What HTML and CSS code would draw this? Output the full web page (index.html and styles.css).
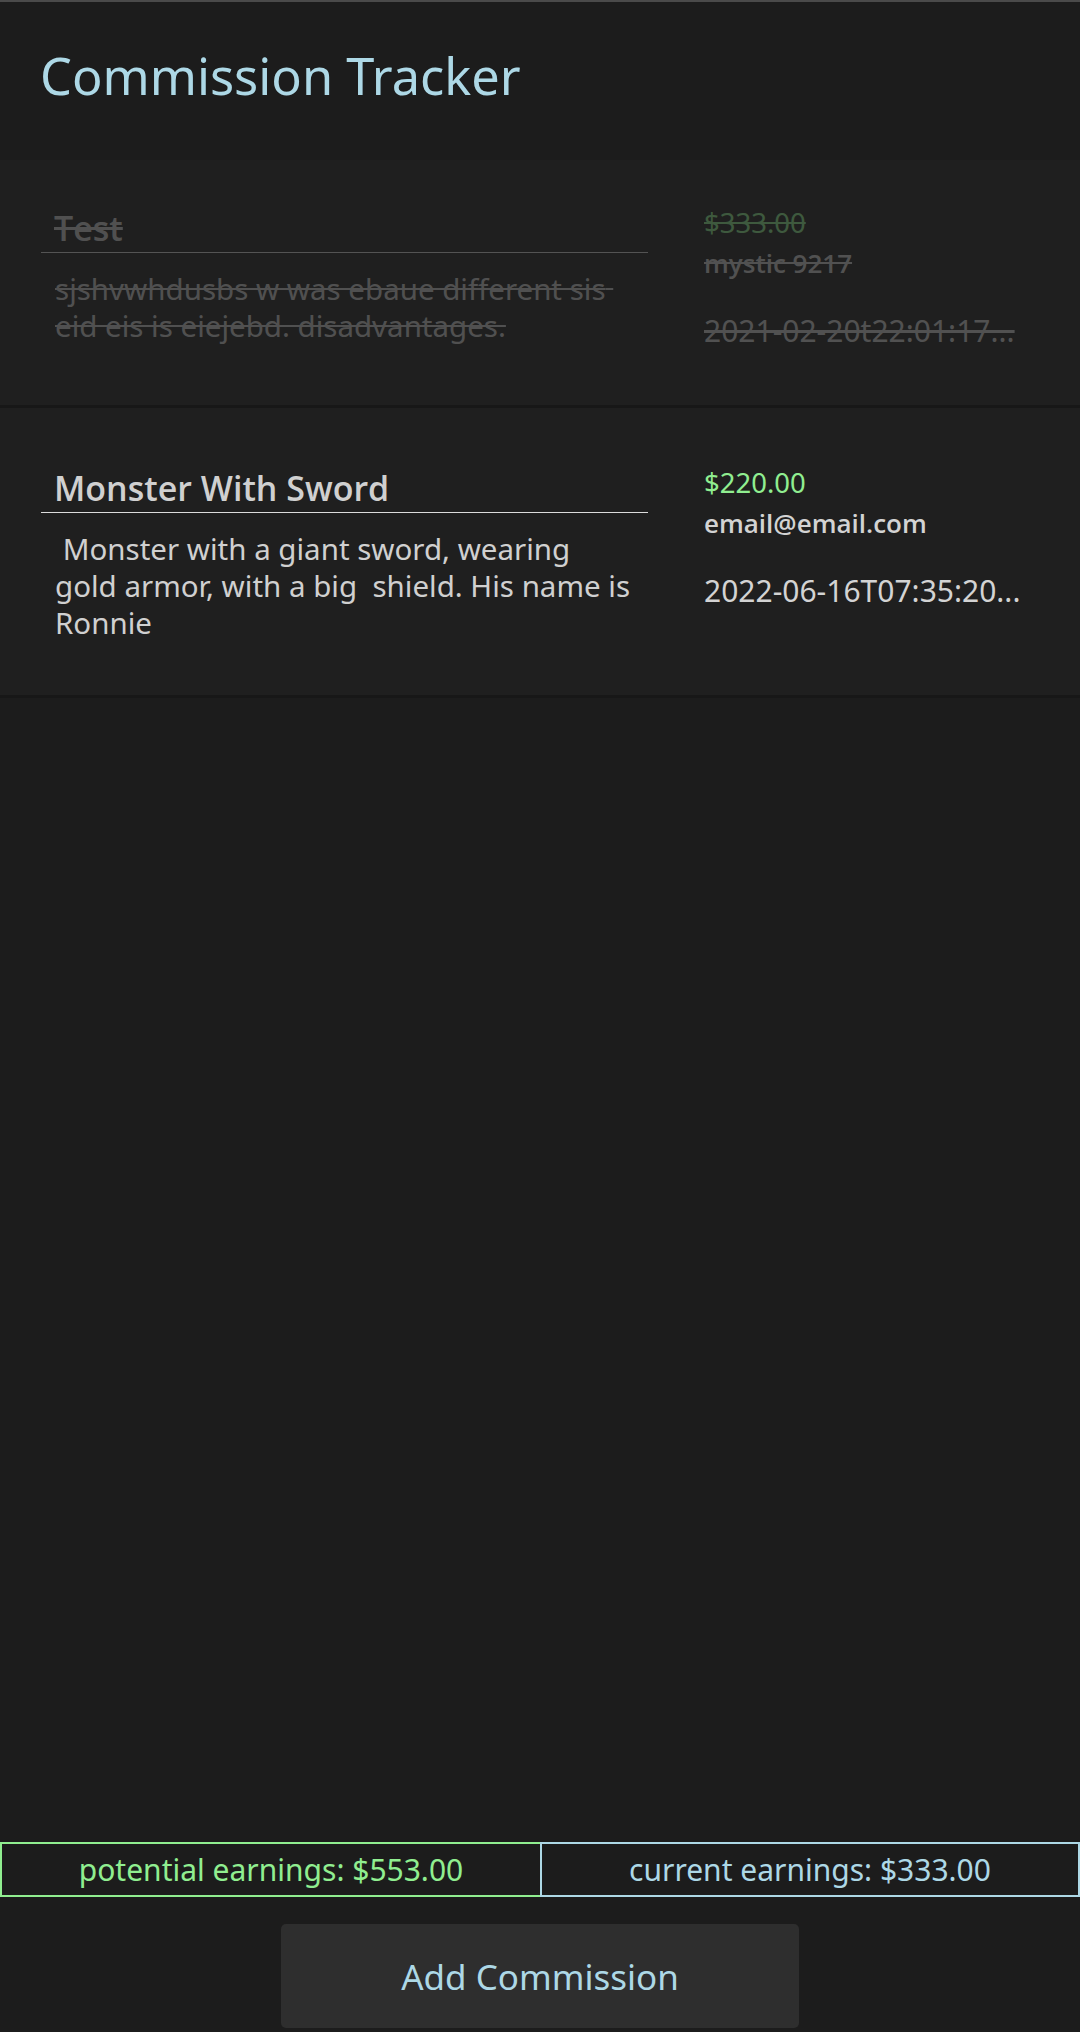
FILE: index.html
```html
<!DOCTYPE html>
<html lang="en">
<head>
<meta charset="utf-8">
<title>Commission Tracker</title>
<link rel="stylesheet" href="styles.css">
</head>
<body>
<div class="app">
  <header class="header">
    <h1 class="title">Commission Tracker</h1>
  </header>
  <main class="list">
    <div class="card card-done">
      <div class="card-main">
        <div class="card-title">Test</div>
        <div class="card-desc">sjshvwhdusbs w was ebaue different sis eid eis is eiejebd. disadvantages.</div>
      </div>
      <div class="card-meta">
        <div class="price">$333.00</div>
        <div class="client">mystic 9217</div>
        <div class="date">2021-02-20t22:01:17...</div>
      </div>
    </div>
    <div class="card">
      <div class="card-main">
        <div class="card-title">Monster With Sword</div>
        <div class="card-desc"> Monster with a giant sword, wearing gold armor, with a big  shield. His name is Ronnie</div>
      </div>
      <div class="card-meta">
        <div class="price">$220.00</div>
        <div class="client">email@email.com</div>
        <div class="date">2022-06-16T07:35:20...</div>
      </div>
    </div>
  </main>
  <footer class="footer">
    <div class="earnings">
      <div class="earn earn-potential">potential earnings: $553.00</div>
      <div class="earn earn-current">current earnings: $333.00</div>
    </div>
    <button class="add-btn" type="button">Add Commission</button>
  </footer>
</div>
</body>
</html>
```

FILE: styles.css
```css
* {
  box-sizing: border-box;
}

html, body {
  margin: 0;
  padding: 0;
  height: 100%;
  background: #1c1c1c;
}

body {
  font-family: "Noto Sans", "Open Sans", sans-serif;
  color: #d3d3d3;
}

.app {
  display: flex;
  flex-direction: column;
  height: 100vh;
  border-top: 2px solid #4a4a4a;
}

.header {
  padding: 49px 40px 0;
  height: 158px;
}

.title {
  margin: 0;
  font-size: 50.5px;
  line-height: 50px;
  font-weight: 400;
  color: #add8e6;
}

.list {
  flex: 1;
  display: flex;
  flex-direction: column;
}

.card {
  display: flex;
  gap: 56px;
  padding: 59px 40px 54px 41px;
  background: #1f1f1f;
  border-bottom: 3px solid #171717;
}

.card-done {
  padding-top: 47px;
}

.card-main {
  width: 607px;
  flex: none;
}

.card-title {
  font-family: "Open Sans", "Noto Sans", sans-serif;
  font-size: 34px;
  line-height: 42px;
  font-weight: 600;
  padding: 0 0 3px 13px;
  border-bottom: 1.5px solid #dcdcdc;
  color: #d0d0d0;
}

.card-desc {
  margin-top: 17px;
  padding: 0 13px 0 14px;
  font-size: 29.5px;
  line-height: 37px;
  white-space: pre-wrap;
  color: #d0d0d0;
}

.card-meta {
  flex: 1;
  min-width: 0;
}

.price {
  font-size: 27.5px;
  line-height: 32px;
  color: #90ee90;
}

.client {
  font-family: "Open Sans", "Noto Sans", sans-serif;
  font-size: 26px;
  line-height: 48px;
  font-weight: 600;
  color: #d3d3d3;
}

.date {
  margin-top: 24px;
  font-size: 30px;
  line-height: 40px;
  white-space: nowrap;
  color: #d3d3d3;
}

.card-done .card-main,
.card-done .card-meta {
  opacity: 0.28;
}

.card-done .card-title,
.card-done .card-desc,
.card-done .price,
.card-done .client,
.card-done .date {
  text-decoration: line-through;
}

.footer {
  display: flex;
  flex-direction: column;
  align-items: center;
  padding-bottom: 4px;
}

.earnings {
  display: grid;
  grid-template-columns: 1fr 1fr;
  width: 100%;
}

.earn {
  height: 55px;
  font-size: 30px;
  line-height: 52px;
  text-align: center;
}

.earn-potential {
  color: #90ee90;
  border: 2px solid #90ee90;
  border-right: none;
}

.earn-current {
  color: #add8e6;
  border: 2px solid #add8e6;
}

.add-btn {
  margin-top: 27px;
  width: 518px;
  height: 104px;
  border: none;
  border-radius: 5px;
  background: #2e2e2e;
  color: #add8e6;
  font-family: "Noto Sans", "Open Sans", sans-serif;
  font-size: 35px;
  line-height: 1;
  padding: 0;
}
```
